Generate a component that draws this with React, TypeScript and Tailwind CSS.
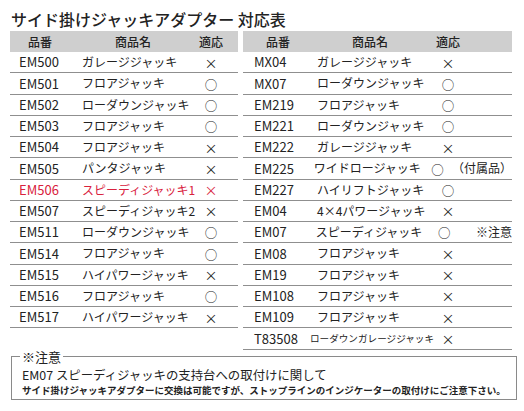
import React from 'react'

type Row = { id: string; name: string; mark: string; note?: string; red?: boolean; small?: boolean }

const leftRows: Row[] = [
  { id: 'EM500', name: 'ガレージジャッキ', mark: '×' },
  { id: 'EM501', name: 'フロアジャッキ', mark: '○' },
  { id: 'EM502', name: 'ローダウンジャッキ', mark: '○' },
  { id: 'EM503', name: 'フロアジャッキ', mark: '○' },
  { id: 'EM504', name: 'フロアジャッキ', mark: '×' },
  { id: 'EM505', name: 'パンタジャッキ', mark: '×' },
  { id: 'EM506', name: 'スピーディジャッキ1', mark: '×', red: true },
  { id: 'EM507', name: 'スピーディジャッキ2', mark: '×' },
  { id: 'EM511', name: 'ローダウンジャッキ', mark: '○' },
  { id: 'EM514', name: 'フロアジャッキ', mark: '○' },
  { id: 'EM515', name: 'ハイパワージャッキ', mark: '×' },
  { id: 'EM516', name: 'フロアジャッキ', mark: '○' },
  { id: 'EM517', name: 'ハイパワージャッキ', mark: '×' },
]

const rightRows: Row[] = [
  { id: 'MX04', name: 'ガレージジャッキ', mark: '×' },
  { id: 'MX07', name: 'ローダウンジャッキ', mark: '○' },
  { id: 'EM219', name: 'フロアジャッキ', mark: '○' },
  { id: 'EM221', name: 'ローダウンジャッキ', mark: '○' },
  { id: 'EM222', name: 'ガレージジャッキ', mark: '×' },
  { id: 'EM225', name: 'ワイドロージャッキ', mark: '○', note: '（付属品）' },
  { id: 'EM227', name: 'ハイリフトジャッキ', mark: '○' },
  { id: 'EM04', name: '4×4パワージャッキ', mark: '×' },
  { id: 'EM07', name: 'スピーディジャッキ', mark: '○', note: '※注意' },
  { id: 'EM08', name: 'フロアジャッキ', mark: '×' },
  { id: 'EM19', name: 'フロアジャッキ', mark: '×' },
  { id: 'EM108', name: 'フロアジャッキ', mark: '×' },
  { id: 'EM109', name: 'フロアジャッキ', mark: '×' },
  { id: 'T83508', name: 'ローダウンガレージジャッキ', mark: '×', small: true },
]

const font = { fontFamily: '"Noto Sans CJK JP", "Noto Sans", sans-serif' }

// the ○ glyph sits high in its em box, nudge it down a little
const Mark = ({ m, className = '' }: { m: string; className?: string }) => (
  <div className={`flex h-full items-center justify-center leading-none ${className}`}>
    <span className={m === '○' ? 'pt-[3px] text-[12.5px]' : 'text-[13px]'}>{m}</span>
  </div>
)

const LeftTable = () => (
  <div className="w-[228px]">
    <div className="flex h-[21px] items-center bg-[#cfcfcf] text-[12px] font-medium">
      <div className="w-[60px] text-center">品番</div>
      <div className="w-[126px] text-center">商品名</div>
      <div className="w-[30px] text-center">適応</div>
    </div>
    {leftRows.map((r) => (
      <div
        key={r.id}
        className={`flex h-[21.25px] items-center border-b border-[#8f8f8f] ${r.red ? 'text-[#d9213d]' : ''}`}
      >
        <div className="w-[72px] pl-[9px] text-[13px]">{r.id}</div>
        <div className="w-[114px] text-[12px] whitespace-nowrap">{r.name}</div>
        <Mark m={r.mark} className="w-[30px]" />
      </div>
    ))}
  </div>
)

const RightTable = () => (
  <div className="w-[269px]">
    <div className="flex h-[21px] items-center bg-[#cfcfcf] text-[12px] font-medium">
      <div className="w-[70px] text-center">品番</div>
      <div className="w-[114px] text-center">商品名</div>
      <div className="w-[42px] text-center">適応</div>
    </div>
    {rightRows.map((r) => (
      <div key={r.id} className="flex h-[21.25px] items-center border-b border-[#8f8f8f]">
        <div className="w-[74px] pl-[11px] text-[13px]">{r.id}</div>
        <div className={`w-[119px] whitespace-nowrap ${r.small ? '-ml-[7px] text-[9.6px]' : 'text-[12px]'}`}>
          {r.name}
        </div>
        <Mark m={r.mark} className={r.small ? 'ml-[7px] w-[24px]' : 'w-[24px]'} />
        {r.note === '※注意' && <div className="ml-[20px] text-[12px] whitespace-nowrap">{r.note}</div>}
        {r.note === '（付属品）' && <div className="ml-[3px] text-[12px] whitespace-nowrap">{r.note}</div>}
      </div>
    ))}
  </div>
)

export default function App() {
  return (
    <div className="w-[524px] h-[411px] bg-white text-[#222]" style={font}>
      <div className="h-[31px] pt-[9px] pl-[11px] text-[16px] leading-[20px] font-medium whitespace-nowrap">
        サイド掛けジャッキアダプター 対応表
      </div>
      <div className="flex items-start gap-[5px] pl-[10px]">
        <LeftTable />
        <RightTable />
      </div>
      <fieldset className="ml-[11px] w-[501px] border border-[#8a8a8a] px-[10px] pb-[3px]">
        <legend className="-ml-[2px] px-[2px] text-[13px] leading-[14px]">※注意</legend>
        <div className="mt-[3px] text-[12.4px] leading-[16px] whitespace-nowrap">
          EM07 スピーディジャッキの支持台への取付けに関して
        </div>
        <div className="mt-[2px] text-[9.5px] leading-[11px] font-bold whitespace-nowrap">
          サイド掛けジャッキアダプターに交換は可能ですが、ストップラインのインジケーターの取付けにご注意下さい。
        </div>
      </fieldset>
    </div>
  )
}
